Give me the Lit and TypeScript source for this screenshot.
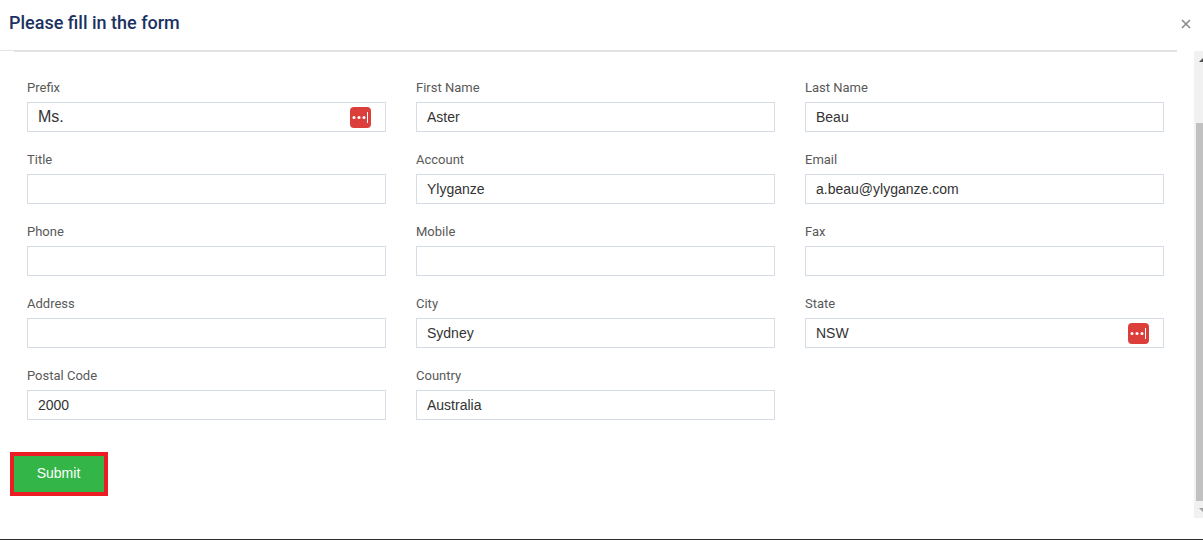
import { LitElement, html, css, nothing } from "lit";
import { customElement } from "lit/decorators.js";

type Field = { label: string; value?: string; key?: boolean; large?: boolean };

const fields: Field[] = [
  { label: "Prefix", value: "Ms.", key: true, large: true },
  { label: "First Name", value: "Aster" },
  { label: "Last Name", value: "Beau" },
  { label: "Title" },
  { label: "Account", value: "Ylyganze" },
  { label: "Email", value: "a.beau@ylyganze.com" },
  { label: "Phone" },
  { label: "Mobile" },
  { label: "Fax" },
  { label: "Address" },
  { label: "City", value: "Sydney" },
  { label: "State", value: "NSW", key: true },
  { label: "Postal Code", value: "2000" },
  { label: "Country", value: "Australia" },
];

@customElement("app-root")
export class AppRoot extends LitElement {
  static styles = css`
    :host {
      display: flex;
      flex-direction: column;
      width: 1203px;
      height: 540px;
      box-sizing: border-box;
      background: #fff;
      border-bottom: 1px solid #2b2b2b;
      font-family: Roboto, "Liberation Sans", sans-serif;
      overflow: hidden;
    }
    .head {
      height: 50px;
      flex: none;
      display: flex;
      justify-content: space-between;
      box-sizing: border-box;
      padding: 12px 12px 0 9px;
    }
    h1 {
      margin: 0;
      font-size: 18px;
      line-height: 22px;
      font-weight: 500;
      color: #1b3260;
    }
    .close {
      margin-top: 7px;
      width: 10px;
      height: 10px;
      display: block;
    }
    .rule {
      flex: none;
      height: 2px;
      display: flex;
      margin-right: 26px;
    }
    .rule i {
      flex: none;
      width: 14px;
      height: 1px;
      background: #e4e4e4;
    }
    .rule b {
      flex: 1;
      background: #e2e2e2;
    }
    .main {
      flex: 1;
      display: flex;
      min-height: 0;
    }
    .content {
      flex: 1;
      min-width: 0;
      box-sizing: border-box;
      padding: 28px 30px 0 10px;
    }
    .grid {
      display: grid;
      grid-template-columns: repeat(3, 359px);
      column-gap: 30px;
      row-gap: 20px;
      padding-left: 17px;
    }
    .field {
      display: flex;
      flex-direction: column;
    }
    label {
      font-size: 13px;
      line-height: 15px;
      color: #595959;
      margin-bottom: 7px;
      height: 15px;
    }
    .input {
      height: 30px;
      box-sizing: border-box;
      border: 1px solid #d6dce5;
      display: flex;
      align-items: center;
      justify-content: space-between;
      padding: 0 14px 0 10px;
      font-family: "Liberation Sans", Arial, sans-serif;
      font-size: 14px;
      color: #333;
    }
    .input.large {
      font-size: 16px;
    }
    .input.large span {
      margin-top: -1px;
    }
    .key {
      width: 21px;
      height: 21px;
      display: block;
      flex: none;
    }
    .submit {
      margin-top: 32px;
      width: 98px;
      height: 44px;
      box-sizing: border-box;
      border: 4px solid #ec1c24;
      background: #34b548;
      color: #fff;
      font: 400 14px "Liberation Sans", Arial, sans-serif;
      padding: 0 1px 2px 0;
      display: block;
    }
    .bar {
      flex: none;
      width: 9px;
      height: 467px;
      margin-top: -1px;
      background: #f1f1f1;
      display: flex;
      flex-direction: column;
    }
    .arrow {
      flex: none;
      width: 9px;
      height: 18px;
      display: block;
    }
    .arrow.down {
      height: 17px;
    }
    .track {
      flex: 1;
      display: flex;
      flex-direction: column;
    }
    .gap {
      height: 54px;
    }
    .thumb {
      height: 378px;
      width: 7px;
      margin-left: 2px;
      background: #c1c1c1;
    }
  `;

  private keyIcon() {
    return html`<svg class="key" viewBox="0 0 21 21" aria-hidden="true">
      <rect x="0" y="0" width="21" height="21" rx="4" fill="#dc3f3b" />
      <circle cx="4" cy="10.5" r="1.5" fill="#fff" />
      <circle cx="9" cy="10.5" r="1.5" fill="#fff" />
      <circle cx="14" cy="10.5" r="1.5" fill="#fff" />
      <rect x="17" y="5" width="1" height="11" fill="#fff" />
    </svg>`;
  }

  render() {
    return html`
      <div class="head">
        <h1>Please fill in the form</h1>
        <svg class="close" viewBox="0 0 10 10" aria-hidden="true">
          <path d="M1 1L9 9M9 1L1 9" stroke="#8a8a8a" stroke-width="1.6" fill="none" />
        </svg>
      </div>
      <div class="rule"><i></i><b></b></div>
      <div class="main">
        <div class="content">
          <div class="grid">
            ${fields.map(
              (f) => html`<div class="field">
                <label>${f.label}</label>
                <div class="input ${f.large ? "large" : ""}">
                  <span>${f.value ?? ""}</span>
                  ${f.key ? this.keyIcon() : nothing}
                </div>
              </div>`
            )}
          </div>
          <button class="submit">Submit</button>
        </div>
        <div class="bar">
          <svg class="arrow" viewBox="0 0 9 18" aria-hidden="true">
            <path d="M5 11L9 7V11Z" fill="#505050" />
          </svg>
          <div class="track">
            <div class="gap"></div>
            <div class="thumb"></div>
          </div>
          <svg class="arrow down" viewBox="0 0 9 17" aria-hidden="true">
            <path d="M5 7H9V11Z" fill="#a0a0a0" />
          </svg>
        </div>
      </div>
    `;
  }
}
